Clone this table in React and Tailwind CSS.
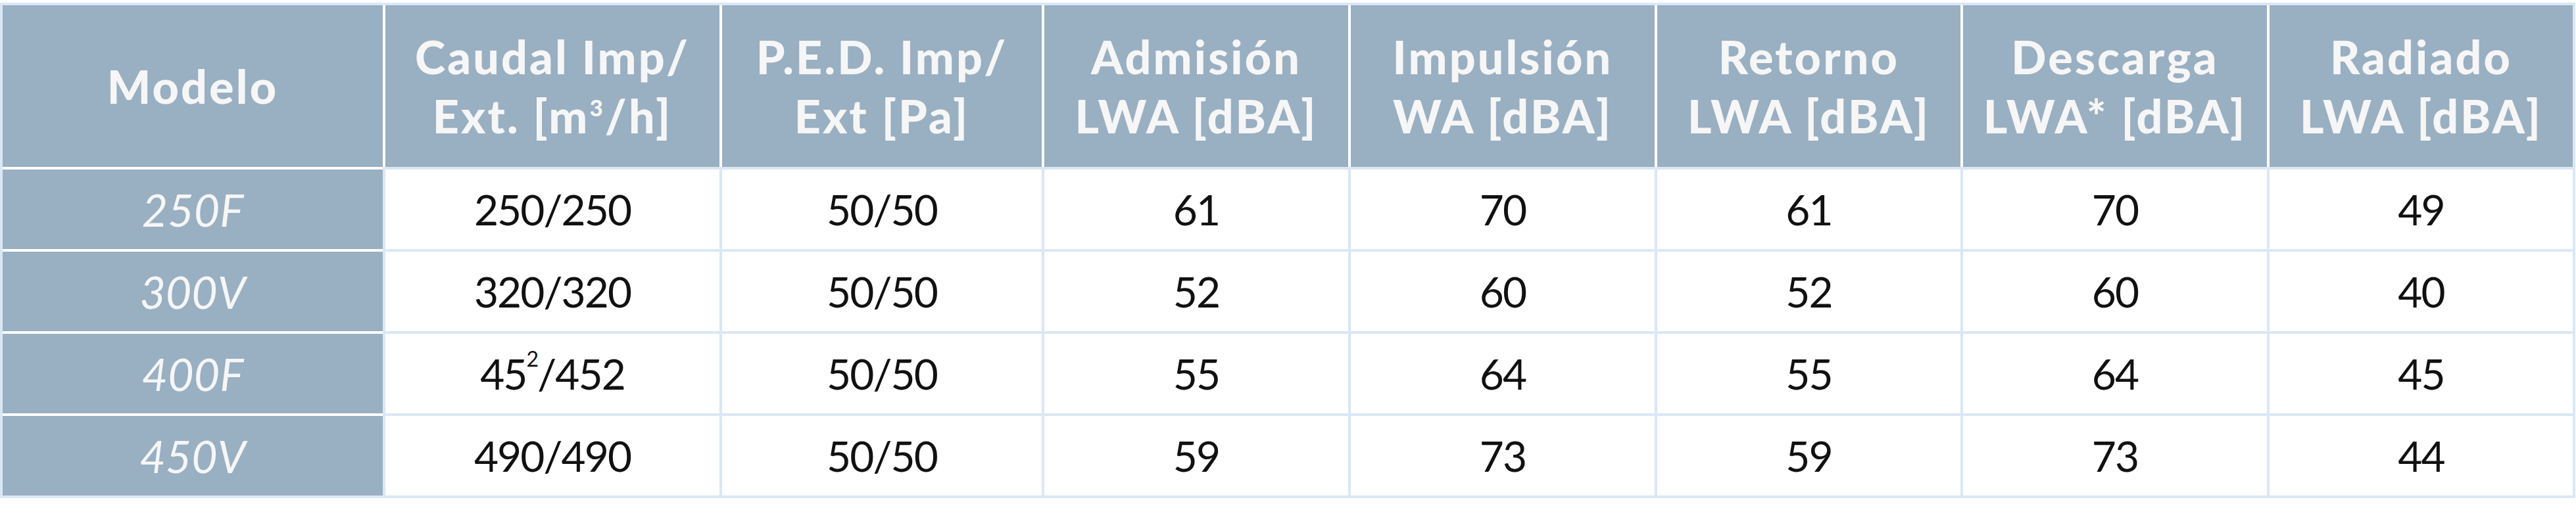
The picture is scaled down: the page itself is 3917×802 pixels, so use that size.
const columns = [
  { w: 'w-[578px]', head: ['Modelo'] },
  { w: 'w-[512px]', head: ['Caudal Imp/', <>Ext. [m<sup className="text-[0.5em] relative -top-[0.75em]">3</sup>/h]</>] },
  { w: 'w-[490px]', head: ['P.E.D. Imp/', 'Ext [Pa]'] },
  { w: 'w-[466px]', head: ['Admisión', 'LWA [dBA]'] },
  { w: 'w-[466px]', head: ['Impulsión', 'WA [dBA]'] },
  { w: 'w-[465px]', head: ['Retorno', 'LWA [dBA]'] },
  { w: 'w-[466px]', head: ['Descarga', 'LWA* [dBA]'] },
  { w: 'w-[465px]', head: ['Radiado', 'LWA [dBA]'] },
];

const rows = [
  ['250F', '250/250', '50/50', '61', '70', '61', '70', '49'],
  ['300V', '320/320', '50/50', '52', '60', '52', '60', '40'],
  ['400F', <>45<sup className="text-[0.5em] relative -top-[0.7em]">2</sup>/452</>, '50/50', '55', '64', '55', '64', '45'],
  ['450V', '490/490', '50/50', '59', '73', '59', '73', '44'],
];

export default function App() {
  return (
    <div className="w-[3917px] h-[802px] bg-white pt-1">
      <div className="w-[3916px] border-4 border-[#dae7f5]">
        <div className="flex h-[246px] bg-[#99afc2] text-[#f6f6f6] font-['Lato',sans-serif] font-black text-[70px] leading-[90px] tracking-[0.045em]">
          {columns.map((col, i) => (
            <div
              key={i}
              className={`${col.w} flex flex-col items-center justify-center text-center ${i > 0 ? 'border-l-4 border-white' : ''}`}
            >
              {col.head.map((line, j) => (
                <div key={j} className="whitespace-nowrap">{line}</div>
              ))}
            </div>
          ))}
        </div>
        {rows.map((row, r) => (
          <div key={r} className="flex h-[125px]">
            {row.map((val, c) =>
              c === 0 ? (
                <div
                  key={c}
                  className="w-[578px] bg-[#99afc2] border-t-4 border-white flex items-center justify-center text-[#f6f6f6] italic font-normal text-[68px] font-['Lato',sans-serif]"
                >
                  {val}
                </div>
              ) : (
                <div
                  key={c}
                  className={`${columns[c].w} bg-white border-t-4 border-l-4 border-[#dae7f5] flex items-center justify-center text-[#111111] text-[64px] tracking-[-0.03em] font-['Lato',sans-serif]`}
                >
                  {val}
                </div>
              )
            )}
          </div>
        ))}
      </div>
    </div>
  );
}
